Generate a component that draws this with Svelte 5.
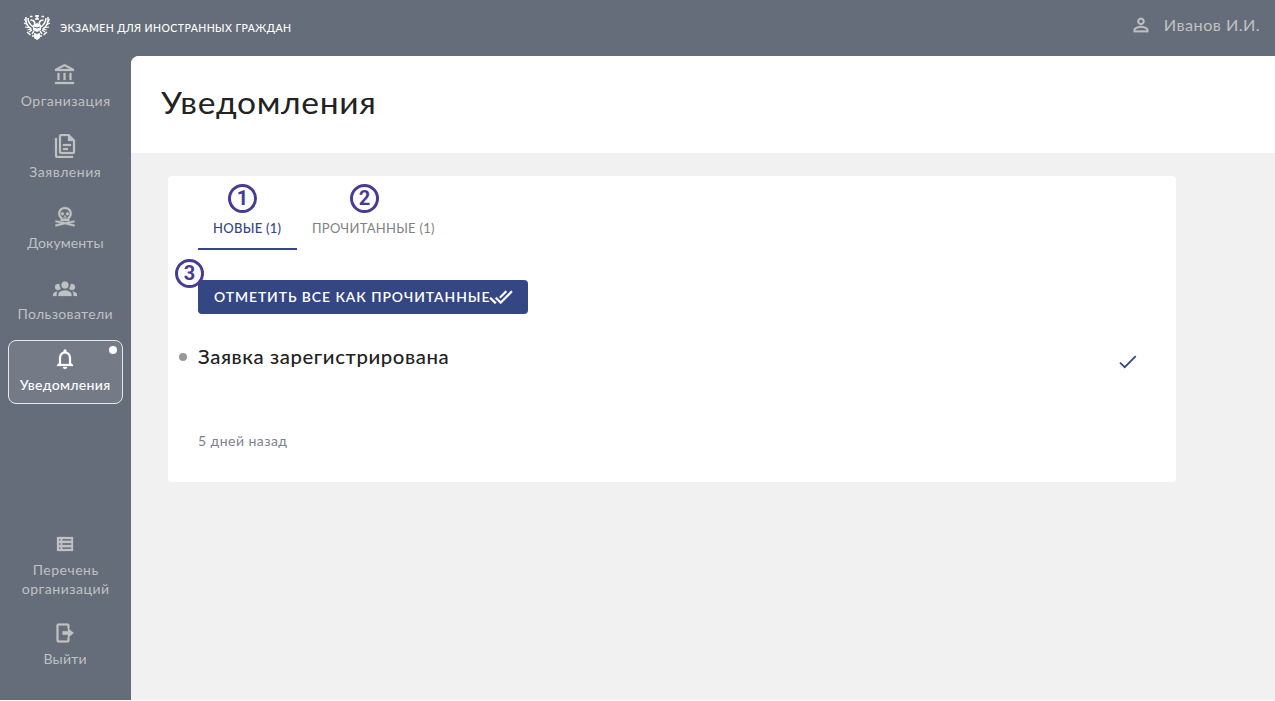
<script>
  const bank = 'M6.5,10H4.5V17H6.5V10M12.5,10H10.5V17H12.5V10M21,19H2V21H21V19M18.5,10H16.5V17H18.5V10M11.5,3.26L16.71,6H6.29L11.5,3.26M11.5,1L2,6V8H21V6L11.5,1Z';
  const files = 'M16 0H8C6.9 0 6 .9 6 2V18C6 19.1 6.9 20 8 20H20C21.1 20 22 19.1 22 18V6L16 0M20 18H8V2H15V7H20V18M4 4V22H20V24H4C2.9 24 2 23.1 2 22V4H4M10 10V12H18V10H10M10 14V16H15V14H10Z';
  const skull = 'M12 2C8.1 2 5.2 4.8 5.2 8.4C5.2 10.5 6.1 12.3 7.6 13.4V16H16.4V13.4C17.9 12.3 18.8 10.5 18.8 8.4C18.8 4.8 15.9 2 12 2M12 4C14.8 4 16.8 5.9 16.8 8.4C16.8 10.1 15.9 11.6 14.6 12.3V14H13.5V12.5H12.5V14H11.5V12.5H10.5V14H9.4V12.3C8.1 11.6 7.2 10.1 7.2 8.4C7.2 5.9 9.2 4 12 4M9.5 7.3A1.5 1.5 0 1 0 9.5 10.3A1.5 1.5 0 1 0 9.5 7.3M14.5 7.3A1.5 1.5 0 1 0 14.5 10.3A1.5 1.5 0 1 0 14.5 7.3M12 10L11 12H13L12 10M2.5 15.4L12 17.2L21.5 15.4V17.3L16 18.2L21.5 19.5V21.5L12 19.3L2.5 21.5V19.5L8 18.2L2.5 17.3Z';
  const group = 'M12 5.5A3.5 3.5 0 0 1 15.5 9A3.5 3.5 0 0 1 12 12.5A3.5 3.5 0 0 1 8.5 9A3.5 3.5 0 0 1 12 5.5M5 8C5.56 8 6.08 8.15 6.53 8.42C6.38 9.85 6.8 11.27 7.66 12.38C7.16 13.34 6.16 14 5 14A3 3 0 0 1 2 11A3 3 0 0 1 5 8M19 8A3 3 0 0 1 22 11A3 3 0 0 1 19 14C17.84 14 16.84 13.34 16.34 12.38C17.2 11.27 17.62 9.85 17.47 8.42C17.92 8.15 18.44 8 19 8M5.5 18.25C5.5 16.18 8.41 14.5 12 14.5C15.59 14.5 18.5 16.18 18.5 18.25V20H5.5V18.25M0 20V18.5C0 17.11 1.89 15.94 4.45 15.6C3.86 16.28 3.5 17.22 3.5 18.25V20H0M24 20H20.5V18.25C20.5 17.22 20.14 16.28 19.55 15.6C22.11 15.94 24 17.11 24 18.5V20Z';
  const bell = 'M12 22c1.1 0 2-.9 2-2h-4c0 1.1.9 2 2 2zm6-6v-5c0-3.07-1.63-5.64-4.5-6.32V4c0-.83-.67-1.5-1.5-1.5s-1.5.67-1.5 1.5v.68C7.64 5.36 6 7.92 6 11v5l-2 2v1h16v-1l-2-2zm-2 1H8v-6c0-2.48 1.51-4.5 4-4.5s4 2.02 4 4.5v6z';
  const list = 'M4 5V19H20V5ZM6 7H7.5V8.7H6ZM9.3 7H18.3V8.7H9.3ZM6 11.1H7.5V12.9H6ZM9.3 11.1H18.3V12.9H9.3ZM6 15.3H7.5V17H6ZM9.3 15.3H18.3V17H9.3Z';
  const exit = 'M5.5 2.5H14.5Q16.5 2.5 16.5 4.5V7.5H14.5V4.5H5.5V19.5H14.5V16.5H16.5V19.5Q16.5 21.5 14.5 21.5H5.5Q3.5 21.5 3.5 19.5V4.5Q3.5 2.5 5.5 2.5ZM9.5 10.2H15V7.3L20.8 12L15 16.7V13.8H9.5Z';
  const account = 'M12 5.9c1.16 0 2.1.94 2.1 2.1s-.94 2.1-2.1 2.1S9.9 9.16 9.9 8s.94-2.1 2.1-2.1m0 9c2.97 0 6.1 1.46 6.1 2.1v1.1H5.9V17c0-.64 3.13-2.1 6.1-2.1M12 4C9.79 4 8 5.79 8 8s1.79 4 4 4 4-1.79 4-4-1.79-4-4-4zm0 9c-2.67 0-8 1.34-8 4v3h16v-3c0-2.66-5.33-4-8-4z';
  const items = [
    { label: 'Организация', icon: bank, c: 'org' },
    { label: 'Заявления', icon: files, c: 'req' },
    { label: 'Документы', icon: skull, c: 'docs' },
    { label: 'Пользователи', icon: group, c: 'users' },
    { label: 'Уведомления', icon: bell, c: 'news', active: true }
  ];
</script>

{#snippet icon(d)}
  <svg width="24" height="24" viewBox="0 0 24 24" fill="currentColor" stroke="currentColor" stroke-width=".25" fill-rule="evenodd"><path {d} /></svg>
{/snippet}

<div class="app">
  <header>
    <svg class="crest" width="28" height="27" viewBox="0 0 28 27" fill="none" stroke="#fff">
      <path d="M3 3Q2 11 8 15M5 4Q5 9 10 13M25 3Q26 11 20 15M23 4Q23 9 18 13" stroke-width="1.5" />
      <path d="M1.5 5L3 8M1 9L5 11M2 13L8 14M4.5 16L9 15M26.500 5L25 8M27 9L23 11M26 13L20 14M23.500 16L19 15" stroke-width="1.2" />
      <path d="M11.500 11Q12.500 8 10 6.500L7.500 6M16.500 11Q15.500 8 18 6.500L20.500 6M12 2H16M14 1V5M7 2.500H9.500M18.500 2.500H21M12 5H16" stroke-width="1.5" />
      <path d="M10 11L14 9L18 11V16L14 18L10 16ZM11 19L14 20L17 19L17 24L14 26L11 24Z" fill="#fff" stroke="none" />
      <path d="M9 16L6 18M4 18L7.500 21M19 16L22 18M24 18L20.500 21M9 22H11M17 22H19M11 17L9 20M17 17L19 20" stroke-width="1.4" />
      <path d="M11 13L14 14L17 13" stroke="#646d79" />
    </svg>
    <span class="brand">ЭКЗАМЕН ДЛЯ ИНОСТРАННЫХ ГРАЖДАН</span>
    <div class="user">{@render icon(account)}<span>Иванов И.И.</span></div>
  </header>
  <div class="body">
    <nav>
      {#each items as it}
        <a class="item {it.c}" class:active={it.active}>
          {@render icon(it.icon)}<span>{it.label}</span>
          {#if it.active}<i class="dot"></i>{/if}
        </a>
      {/each}
      <a class="item low">{@render icon(list)}<span>Перечень<br />организаций</span></a>
      <a class="item exit">{@render icon(exit)}<span>Выйти</span></a>
    </nav>
    <main>
      <h1><span>Уведомления</span></h1>
      <section>
        <div class="tabs">
          <div class="tab on"><span>НОВЫЕ (1)</span><b class="mark">1</b></div>
          <div class="tab"><span>ПРОЧИТАННЫЕ (1)</span><b class="mark">2</b></div>
        </div>
        <button><span>ОТМЕТИТЬ ВСЕ КАК ПРОЧИТАННЫЕ</span>{@render icon('M0.41,13.41L6,19L7.41,17.58L1.83,12M22.24,5.58L11.66,16.17L7.5,12L6.07,13.41L11.66,19L23.66,7M18,7L16.59,5.58L10.24,11.93L11.66,13.34L18,7Z')}<b class="mark">3</b></button>
        <div class="note">
          <i class="bullet"></i>
          <h2>Заявка зарегистрирована</h2>
          <svg class="check" width="18" height="14" viewBox="0 0 18 14" fill="none" stroke="#344684" stroke-width="1.8"><path d="M1 7.7L5.7 12.2L16.7 1.2" /></svg>
        </div>
        <p>5 дней назад</p>
      </section>
    </main>
  </div>
</div>

<style>
  :global(body) { margin: 0; background: #fff; }
  * { box-sizing: border-box; }
  .app { width: 1275px; height: 700px; background: #646d79; font-family: Lato, "Noto Sans", sans-serif; color: #c0c1c2; display: flex; flex-direction: column; }
  span, h2, p { white-space: nowrap; }
  svg { flex: none; display: block; }
  header { height: 56px; display: flex; align-items: center; padding: 0 15px 2px 23px; }
  .brand { color: #fff; font-size: 10.5px; letter-spacing: .42px; margin-left: 9px; font-weight: 500; padding-top: 1px; }
  .user { margin-left: auto; display: flex; align-items: center; gap: 18px; font-size: 15px; letter-spacing: .42px; margin-top: -4px; }
  .user span { transform: scaleX(1.08); transform-origin: right; }
  .user svg { width: 24px; height: 24px; padding: 1px; }
  .body { flex: 1; display: flex; min-height: 0; }
  nav { width: 130.5px; padding-left: 7.5px; display: flex; flex-direction: column; }
  .item { position: relative; width: 115.5px; height: 64px; margin-bottom: 7px; padding-top: 6px; display: flex; flex-direction: column; align-items: center; font-size: 13px; line-height: 19px; letter-spacing: .46px; text-align: center; border: 1px solid transparent; border-radius: 8px; }
  .item span { margin-top: 5px; transform: scaleX(1.08); }
  .docs { letter-spacing: .12px; }
  .users { letter-spacing: .32px; }
  .active { background: #747b87; border-color: #e5e7e9; color: #fff; font-weight: 500; letter-spacing: .28px; }
  .dot { position: absolute; right: 5px; top: 5px; width: 8px; height: 8px; border-radius: 50%; background: #fff; }
  .low { margin-top: 114px; height: 82px; }
  .exit { letter-spacing: .2px; }
  main { flex: 1; background: #f1f1f1; border-radius: 8px 0 0; overflow: hidden; }
  h1 { height: 97px; margin: 0; background: #fff; color: #222; padding: 0 0 5px 30.5px; display: flex; align-items: center; font-weight: 400; font-size: 30.5px; letter-spacing: .6px; }
  h1 span { transform: scaleX(1.1); transform-origin: left; }
  section { width: 1008px; height: 306px; margin: 22.5px 0 0 37.5px; background: #fff; border-radius: 4px; padding: 0 30px; }
  .tabs { display: flex; height: 74px; }
  .tab { position: relative; padding: 43px 15px 0; font-size: 13px; line-height: 18px; color: #828282; letter-spacing: .27px; }
  .on { color: #344684; border-bottom: 2px solid #344684; width: 99px; font-weight: 500; }
  .mark { position: absolute; width: 29px; height: 29px; border: 3px solid #463c96; border-radius: 50%; color: #463c96; font: 700 20px/23px Roboto, sans-serif; text-align: center; letter-spacing: 0; left: 30px; top: 8px; }
  .tab:nth-child(2) .mark { left: 53px; }
  button { position: relative; margin: 30px 0 0; border: 0; border-radius: 4px; background: #344684; color: #fff; height: 34px; width: 329.5px; padding: 0 0 0 16px; display: flex; align-items: center; font: 600 13px Lato, "Noto Sans", sans-serif; letter-spacing: .88px; }
  button span { width: 275px; text-align: left; transform: scaleX(1.07); transform-origin: left; }
  button .mark { left: -23px; top: -21px; }
  .note { position: relative; display: flex; align-items: center; justify-content: space-between; height: 28px; margin-top: 29px; }
  .bullet { position: absolute; left: -19px; top: 10px; width: 8px; height: 8px; border-radius: 50%; background: #999; }
  h2 { margin: 0; padding-bottom: 1px; color: #222; font-size: 19px; font-weight: 500; letter-spacing: .55px; transform: scaleX(1.07); transform-origin: left; }
  .check { margin: 10px 9px 0 0; }
  p { margin: 60px 0 0; font-size: 13px; line-height: 20px; letter-spacing: .4px; color: #7b818d; transform: scaleX(1.08); transform-origin: left; }
</style>
